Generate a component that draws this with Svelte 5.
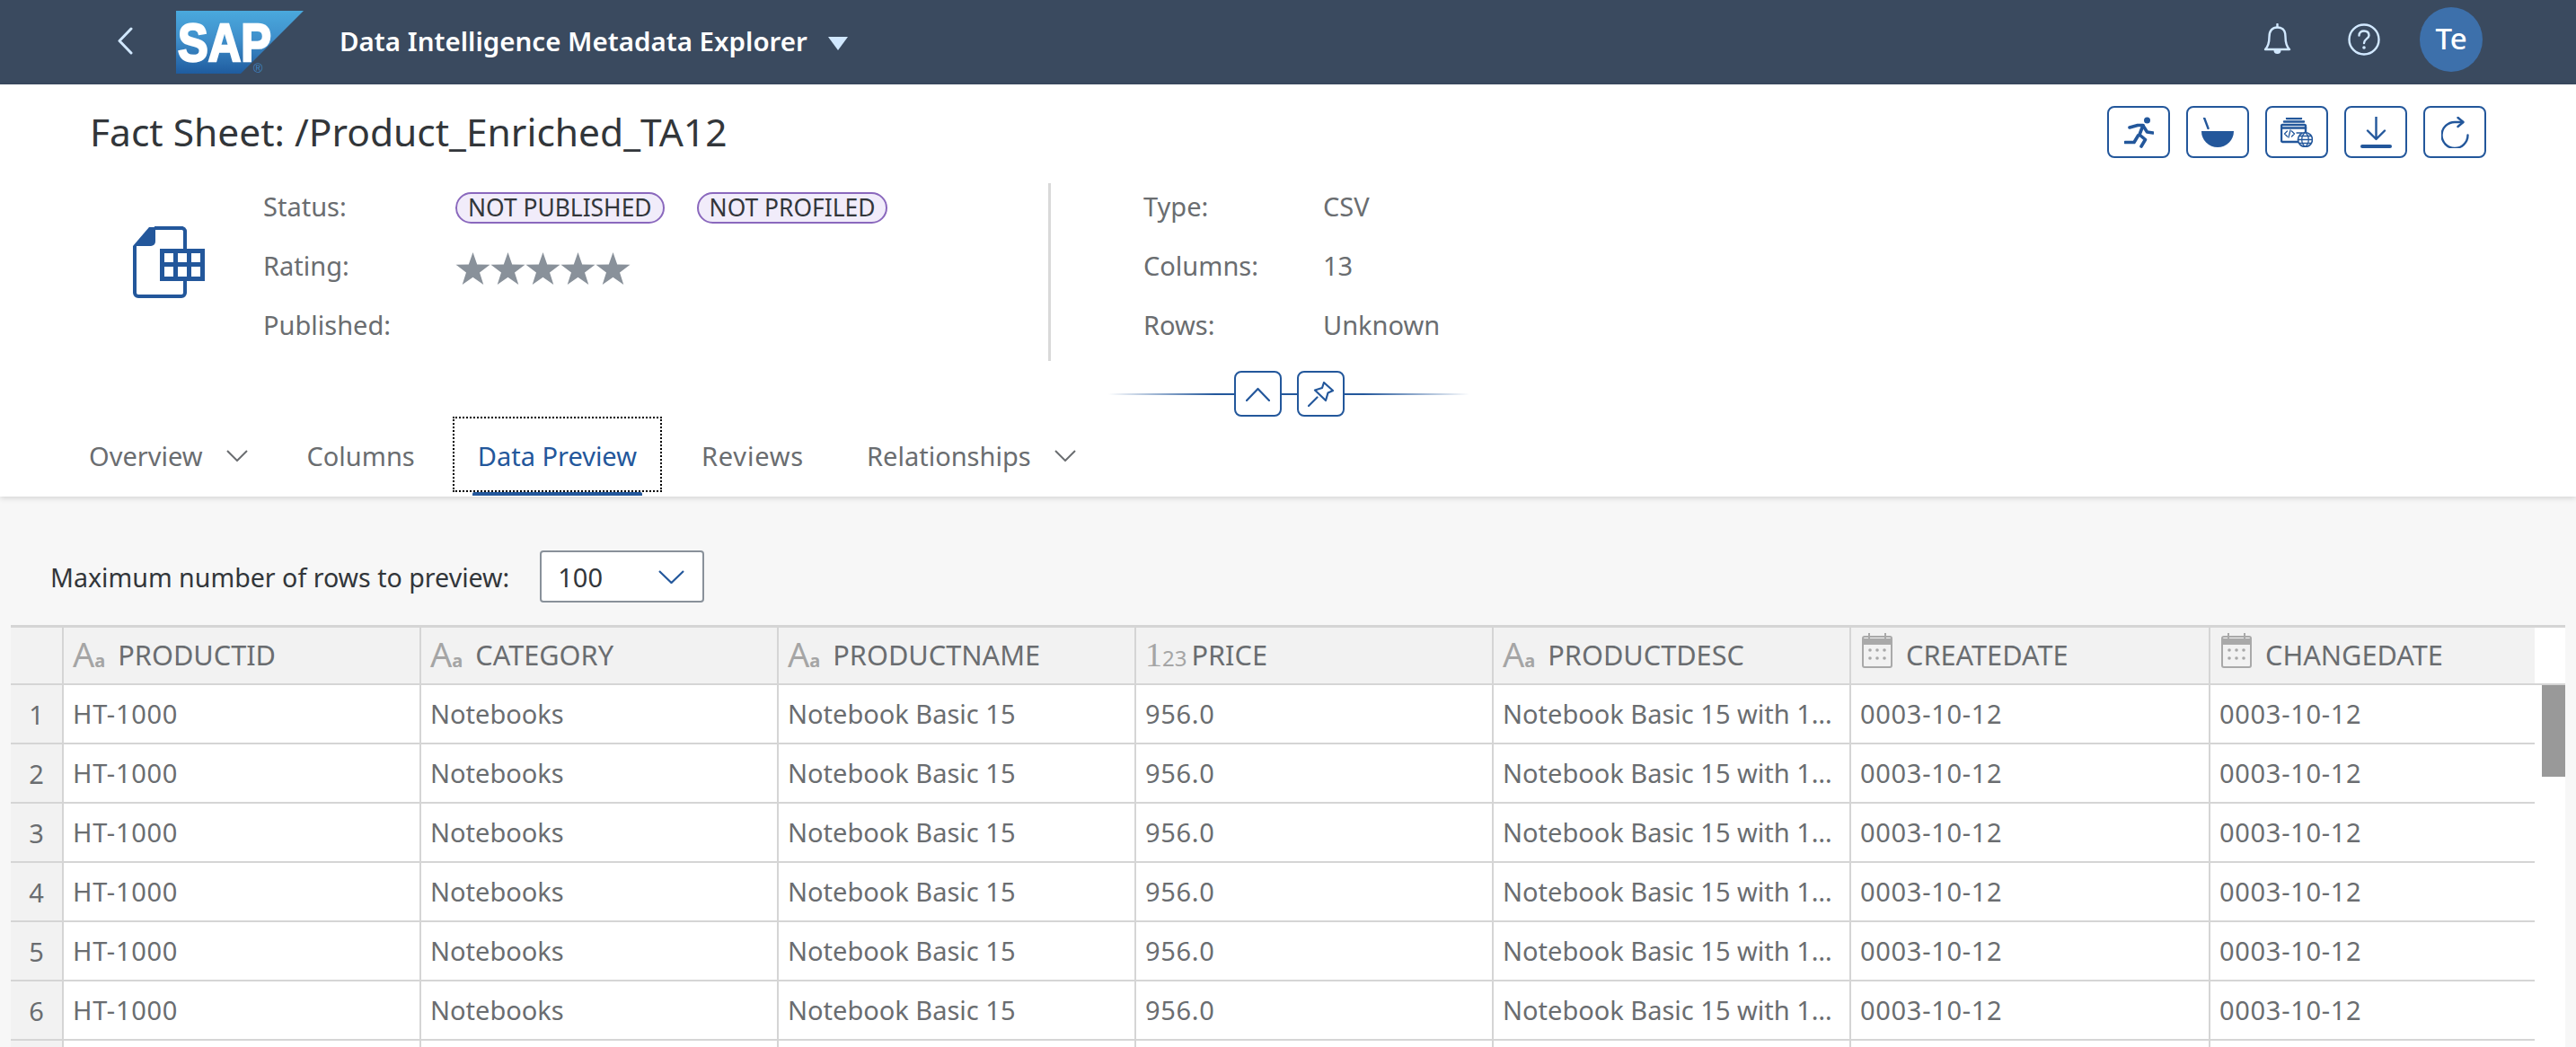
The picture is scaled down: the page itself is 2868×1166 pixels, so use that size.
<script>
  const columns = [
    { kind: 'text', name: 'PRODUCTID' },
    { kind: 'text', name: 'CATEGORY' },
    { kind: 'text', name: 'PRODUCTNAME' },
    { kind: 'num', name: 'PRICE' },
    { kind: 'text', name: 'PRODUCTDESC' },
    { kind: 'date', name: 'CREATEDATE' },
    { kind: 'date', name: 'CHANGEDATE' }
  ]
  const row = ['HT-1000', 'Notebooks', 'Notebook Basic 15', '956.0', 'Notebook Basic 15 with 16 GB RAM', '0003-10-12', '0003-10-12']
  const rows = [1, 2, 3, 4, 5, 6, 7]
  const stars = [0, 1, 2, 3, 4]
</script>

<div class="page">
  <header class="shell">
    <svg class="back" width="17" height="31" viewBox="0 0 17 31"><path d="M15 2 L2 15.5 L15 29" /></svg>
    <svg class="logo" width="142" height="70" viewBox="0 0 142 70">
      <defs>
        <linearGradient id="sapblue" x1="0" y1="0" x2="0" y2="1">
          <stop offset="0" stop-color="#4aa9dd" />
          <stop offset="0.45" stop-color="#3f8fcb" />
          <stop offset="1" stop-color="#1f5c9f" />
        </linearGradient>
      </defs>
      <polygon points="0,0 142,0 72,70 0,70" fill="url(#sapblue)" />
      <text x="2" y="56" class="logo-text" textLength="104" lengthAdjust="spacingAndGlyphs">SAP</text>
      <text x="86" y="69" class="logo-reg">®</text>
    </svg>
    <span class="app-title">Data Intelligence Metadata Explorer</span>
    <span class="app-caret"></span>
    <div class="shell-right">
      <svg width="31" height="36" viewBox="0 0 31 36" class="line-icon">
        <path d="M2 29 C6 25 6.500 21 6.500 15 C6.500 8 10 4.500 15.500 4.500 C21 4.500 24.500 8 24.500 15 C24.500 21 25 25 29 29 Z" />
        <path d="M15.500 1 V4" />
        <path class="fill" d="M11.500 30 H19.500 A4 4 0 0 1 11.500 30 Z" />
      </svg>
      <svg width="36" height="36" viewBox="0 0 36 36" class="line-icon help">
        <circle cx="18" cy="18" r="16.500" />
        <path d="M12.500 13.500 C12.500 10 15 8.500 18 8.500 C21.500 8.500 23.500 10.500 23.500 13.500 C23.500 17 18 17.500 18 22" />
        <circle class="fill" cx="18" cy="27" r="1.800" />
      </svg>
      <div class="avatar">Te</div>
    </div>
  </header>

  <section class="head">
    <div class="titlebar">
      <h1>Fact Sheet: /Product_Enriched_TA12</h1>
      <div class="actions">
        <button class="act">
          <svg width="33" height="35" viewBox="0 0 33 35">
            <circle class="b-fill" cx="25.500" cy="4" r="3.500" />
            <path class="b-thick" d="M6 12 L15 9.500 H21 L17 20 L23.500 25.500 L19 33" />
            <path class="b-thick" d="M21 10 L25.500 17 L32 18" />
            <path class="b-thick" d="M15.500 21 L11 28.500 H1" />
          </svg>
        </button>
        <button class="act">
          <svg width="36" height="33" viewBox="0 0 36 33">
            <path class="b-line" d="M3 0 L7.500 12" />
            <path class="b-fill" d="M0 15 H36 A18 18 0 0 1 0 15 Z" />
          </svg>
        </button>
        <button class="act">
          <svg width="36" height="33" viewBox="0 0 36 33">
            <path class="b-line" d="M7 1 H23 M4 4.500 H26" />
            <rect class="b-line" x="1" y="8" width="27" height="19" rx="1.500" />
            <path class="b-line" d="M1 11.500 H28" />
            <path class="b-thin" d="M7.500 15 L4.500 18 L7.500 21 M11 14 L9 22 M12.500 15 L15.500 18 L12.500 21 M18 17 H24" />
            <circle class="globe-bg" cx="27.500" cy="24.500" r="8" />
            <path class="b-thin" d="M19.500 24.500 H35.500 M21 20.500 H34 M21 28.500 H34 M27.500 16.500 C22.500 20 22.500 29 27.500 32.500 C32.500 29 32.500 20 27.500 16.500 Z" />
          </svg>
        </button>
        <button class="act">
          <svg width="35" height="35" viewBox="0 0 35 35">
            <path class="b-line" d="M17.500 0 V24 M8 15.500 L17.500 25 L27 15.500" />
            <rect class="b-fill" x="0" y="31" width="35" height="4" rx="2" />
          </svg>
        </button>
        <button class="act">
          <svg width="31" height="35" viewBox="0 0 31 35">
            <path class="b-line" d="M24 6 H15.500 A14.500 14.500 0 1 0 29.500 20.500" />
            <path class="b-line" d="M18.500 1 L24.500 6 L18.500 11" />
          </svg>
        </button>
      </div>
    </div>

    <div class="facts">
      <div class="facts-left">
        <svg class="obj-icon" width="80" height="81" viewBox="0 0 80 81">
          <path class="obj-line" d="M24 2 H55 A4 4 0 0 1 58 5 V26 M58 60 V74 A4 4 0 0 1 54 78 H6 A4 4 0 0 1 2 74 V22" />
          <path class="obj-fill" d="M0 22 L18 1 H25 V17 A5 5 0 0 1 20 22 Z" />
          <rect class="obj-fill" x="30" y="25" width="50" height="36" />
          <g class="obj-cell">
            <rect x="35" y="30" width="10" height="10" /><rect x="50" y="30" width="10" height="10" /><rect x="65" y="30" width="10" height="10" />
            <rect x="35" y="45" width="10" height="11" /><rect x="50" y="45" width="10" height="11" /><rect x="65" y="45" width="10" height="11" />
          </g>
        </svg>
        <dl class="grid">
          <dt>Status:</dt>
          <dd class="chips"><span class="chip">NOT PUBLISHED</span><span class="chip">NOT PROFILED</span></dd>
          <dt>Rating:</dt>
          <dd class="stars">
            {#each stars as s}
              <svg width="39" height="36" viewBox="0 0 39 36"><polygon points="19.500,0 24.200,13.500 38.500,13.700 27,22.400 31.300,36 19.500,27.800 7.700,36 12,22.400 0.500,13.700 14.800,13.500" /></svg>
            {/each}
          </dd>
          <dt>Published:</dt>
          <dd></dd>
        </dl>
      </div>
      <div class="divider"></div>
      <dl class="grid right">
        <dt>Type:</dt><dd>CSV</dd>
        <dt>Columns:</dt><dd>13</dd>
        <dt>Rows:</dt><dd>Unknown</dd>
      </dl>
    </div>

    <div class="collapse">
      <span class="fade left"></span>
      <button class="mini">
        <svg width="27" height="16" viewBox="0 0 27 16"><path d="M1 15 L13.500 2 L26 15" /></svg>
      </button>
      <span class="link"></span>
      <button class="mini">
        <svg width="29" height="28" viewBox="0 0 29 28">
          <path d="M1 27 L10.500 17.500" />
          <path d="M18 1 L28 10 L22.500 12.500 L20 21 L8 9.500 L16 7 Z" />
        </svg>
      </button>
      <span class="fade right"></span>
    </div>

    <nav class="tabs">
      <div class="tab overview">Overview<svg class="chev" width="24" height="13" viewBox="0 0 24 13"><path d="M1 1 L12 12 L23 1" /></svg></div>
      <div class="tab">Columns</div>
      <div class="tab active">Data Preview</div>
      <div class="tab reviews">Reviews</div>
      <div class="tab">Relationships<svg class="chev" width="24" height="13" viewBox="0 0 24 13"><path d="M1 1 L12 12 L23 1" /></svg></div>
    </nav>
  </section>

  <main class="content">
    <div class="toolbar">
      <span class="tool-label">Maximum number of rows to preview:</span>
      <div class="select">
        <span>100</span>
        <svg width="29" height="15" viewBox="0 0 29 15"><path d="M1 1 L14.500 14 L28 1" /></svg>
      </div>
    </div>

    <div class="table">
      <div class="tr th">
        <div class="num"></div>
        {#each columns as col}
          <div class="cell">
            {#if col.kind === 'text'}
              <span class="type"><span class="big">A</span><b>a</b></span>
            {:else if col.kind === 'num'}
              <span class="type digits"><span class="big serif">1</span><span class="sub">23</span></span>
            {:else}
              <svg class="cal" width="34" height="40" viewBox="0 0 34 40">
                <path d="M1 7 H33 V14 H1 Z" fill="#a9a9a9" />
                <rect x="1" y="5" width="32" height="34" rx="2" fill="none" stroke="#a9a9a9" stroke-width="2" />
                <path d="M8 1 V7 M26 1 V7" stroke="#a9a9a9" stroke-width="2" />
                {#each [9, 17, 25] as x}
                  <circle cx={x} cy="20" r="1.800" fill="#a9a9a9" /><circle cx={x} cy="29" r="1.800" fill="#a9a9a9" />
                {/each}
              </svg>
            {/if}
            <span class="name">{col.name}</span>
          </div>
        {/each}
      </div>
      {#each rows as r}
        <div class="tr">
          <div class="num">{r}</div>
          {#each row as value}
            <div class="cell"><span class="val" class:numeric={/\d/.test(value) && value.length < 12}>{value}</span></div>
          {/each}
        </div>
      {/each}
      <div class="thumb"></div>
    </div>
  </main>
</div>

<style>
  :global(body){
    margin: 0;
    background: #f7f7f7;
    font-family: "Noto Sans", "Open Sans", sans-serif;
    overflow: hidden;
  }

  .page{
    height: 1166px;
    overflow: hidden;
    font-size: 29px;
    color: #6a6d70;
  }

  .shell{
    height: 94px;
    box-sizing: border-box;
    background: #3a4a5f;
    display: flex;
    align-items: center;
    padding: 0 104px 0 131px;
    color: #fff;
  }
  .back{
    margin-top: -4px;
  }
  .back path{
    fill: none;
    stroke: #d1e8ff;
    stroke-width: 3;
    stroke-linecap: round;
    stroke-linejoin: round;
  }
  .logo{
    margin-left: 48px;
    margin-top: -1px;
  }
  .logo-text{
    font-family: "Liberation Sans", sans-serif;
    font-weight: 700;
    font-size: 60px;
    fill: #fff;
    stroke: #fff;
    stroke-width: 2.500;
  }
  .logo-reg{
    font-family: "Liberation Sans", sans-serif;
    font-size: 14px;
    fill: #3f86c4;
  }
  .app-title{
    margin-left: 40px;
    font-weight: 600;
    font-size: 29.500px;
    margin-top: -3px;
  }
  .app-caret{
    margin-left: 23px;
    border-left: 11px solid transparent;
    border-right: 11px solid transparent;
    border-top: 15px solid #d1e8ff;
    margin-top: 3px;
  }
  .shell-right{
    margin-left: auto;
    display: flex;
    align-items: center;
  }
  .line-icon{
    margin-top: -6px;
  }
  .line-icon.help{
    margin-left: 63px;
    margin-right: 44px;
  }
  .line-icon path, .line-icon circle{
    fill: none;
    stroke: #d1e8ff;
    stroke-width: 2.400;
    stroke-linejoin: round;
    stroke-linecap: round;
  }
  .line-icon .fill{
    fill: #d1e8ff;
    stroke: none;
  }
  .avatar{
    width: 70px;
    height: 72px;
    border-radius: 50%;
    background: #3d70ab;
    display: flex;
    align-items: center;
    justify-content: center;
    font-size: 33px;
    font-weight: 500;
    margin-top: -6px;
    padding-bottom: 4px;
    box-sizing: border-box;
  }

  .head{
    background: #fff;
    height: 459px;
    box-sizing: border-box;
    box-shadow: 0 2px 6px rgba(0,0,0,.14);
    position: relative;
  }
  .titlebar{
    display: flex;
    align-items: center;
    justify-content: space-between;
    padding: 24px 100px 0 100px;
  }
  h1{
    margin: 0;
    font-weight: 400;
    font-size: 42.500px;
    color: #32363a;
    line-height: 58px;
  }
  .actions{
    display: flex;
    gap: 18px;
  }
  button{
    background: #fff;
    border: 2px solid #23579b;
    border-radius: 8px;
    padding: 0;
    display: flex;
    align-items: center;
    justify-content: center;
    box-sizing: border-box;
  }
  .act{
    width: 70px;
    height: 58px;
  }
  .b-fill{
    fill: #23579b;
  }
  .b-line, .b-thin, .b-thick{
    fill: none;
    stroke: #23579b;
    stroke-width: 2.400;
    stroke-linejoin: round;
    stroke-linecap: round;
  }
  .b-thin{
    stroke-width: 1.300;
  }
  .b-thick{
    stroke-width: 3.600;
  }
  .globe-bg{
    fill: #fff;
    stroke: #23579b;
    stroke-width: 1.600;
  }

  .facts{
    display: flex;
    height: 198px;
    margin-top: 21px;
  }
  .facts-left{
    display: flex;
    width: 1167px;
    padding-left: 148px;
    box-sizing: border-box;
  }
  .obj-icon{
    margin-top: 55px;
    margin-right: 65px;
    flex: none;
  }
  .obj-line{
    fill: none;
    stroke: #23579b;
    stroke-width: 4;
  }
  .obj-fill{
    fill: #23579b;
  }
  .obj-cell rect{
    fill: #fff;
  }
  .grid{
    margin: 0;
    display: grid;
    grid-template-columns: 214px 1fr;
    grid-auto-rows: 66px;
    align-items: center;
    flex: 1;
  }
  .grid.right{
    grid-template-columns: 200px 1fr;
    margin-left: 103px;
  }
  dt, dd{
    margin: 0;
    padding-bottom: 2px;
  }
  .chips{
    display: flex;
    gap: 36px;
    padding: 0;
    margin-top: 2px;
  }
  .chip{
    height: 35px;
    box-sizing: border-box;
    border: 2px solid #8a68bd;
    border-radius: 18px;
    background: #f1ecfa;
    color: #32363a;
    display: flex;
    align-items: center;
    padding: 0 12px;
    font-size: 26.400px;
  }
  .stars{
    display: flex;
    padding: 0;
    margin-top: 6px;
  }
  .stars polygon{
    fill: #89919a;
  }
  .divider{
    width: 3px;
    height: 198px;
    margin-top: 7px;
    background: #d9d9d9;
  }

  .collapse{
    display: flex;
    align-items: center;
    width: 402px;
    margin: 18px 0 0 1234px;
  }
  .fade{
    flex: 1;
    height: 2px;
  }
  .fade.left{
    background: linear-gradient(to right, rgba(35,87,155,0), #23579b 85%);
  }
  .fade.right{
    background: linear-gradient(to left, rgba(35,87,155,0), #23579b 85%);
  }
  .link{
    width: 17px;
    height: 2px;
    background: #23579b;
  }
  .mini{
    width: 53px;
    height: 51px;
  }
  .mini path{
    fill: none;
    stroke: #23579b;
    stroke-width: 2.200;
    stroke-linejoin: round;
    stroke-linecap: round;
  }

  .tabs{
    display: flex;
    gap: 14px;
    padding-left: 71px;
  }
  .tab{
    height: 84px;
    box-sizing: border-box;
    padding: 0 28px;
    display: flex;
    align-items: center;
    position: relative;
    padding-top: 2px;
  }
  .tab.overview{
    margin-right: -4px;
  }
  .tab.active{
    margin-right: 2px;
  }
  .tab.reviews{
    margin-right: 0;
    letter-spacing: .8px;
  }
  .chev{
    margin-left: 26px;
  }
  .chev path{
    fill: none;
    stroke: #6a6d70;
    stroke-width: 2;
  }
  .tab.active{
    color: #23579b;
    outline: 2px dotted #000;
    outline-offset: -2px;
  }
  .tab.active::after{
    content: '';
    position: absolute;
    left: 22px;
    right: 22px;
    top: 84px;
    height: 4px;
    background: #23579b;
    border-radius: 2px 2px 0 0;
  }

  .toolbar{
    display: flex;
    align-items: center;
    padding: 60px 0 0 56px;
  }
  .tool-label{
    color: #32363a;
    font-size: 28.600px;
  }
  .select{
    margin-left: 34px;
    width: 183px;
    height: 58px;
    box-sizing: border-box;
    background: #fff;
    border: 2px solid #89919a;
    border-radius: 4px;
    display: flex;
    align-items: center;
    justify-content: space-between;
    padding: 0 20px 0 18px;
    color: #32363a;
  }
  .select path{
    fill: none;
    stroke: #23579b;
    stroke-width: 2.200;
  }

  .table{
    margin: 25px 12px 0;
    background: #fff;
    position: relative;
  }
  .tr{
    display: grid;
    grid-template-columns: 57px repeat(5, 398px) 400px 363px;
    height: 66px;
    box-sizing: border-box;
    width: 2810px;
    border-bottom: 2px solid #d5d5d5;
  }
  .tr.th{
    width: auto;
    height: 67px;
    border-top: 3px solid #d5d5d5;
    border-bottom: 2px solid #d5d5d5;
  }
  .th > div{
    background: #f2f2f2;
  }
  .num{
    background: #f2f2f2;
    display: flex;
    align-items: center;
    justify-content: center;
  }
  .cell{
    border-left: 2px solid #d5d5d5;
    padding: 0 10px 2px 10px;
    display: flex;
    align-items: center;
    min-width: 0;
    box-sizing: border-box;
    overflow: hidden;
  }
  .val{
    white-space: nowrap;
    overflow: hidden;
    text-overflow: ellipsis;
  }
  .val.numeric{
    letter-spacing: .7px;
  }
  .type{
    color: #a5a5a5;
    display: inline-flex;
    align-items: baseline;
    margin-right: 14px;
    white-space: nowrap;
  }
  .type.digits{
    margin-right: 5px;
  }
  .big{
    font-size: 38px;
    line-height: 1;
  }
  .serif{
    font-family: "Liberation Serif", serif;
  }
  .type b{
    font-size: 20px;
    font-weight: 700;
  }
  .sub{
    font-size: 24px;
  }
  .name{
    white-space: nowrap;
    font-size: 30.700px;
  }
  .cal{
    margin: -10px 15px 0 2px;
    flex: none;
  }
  .thumb{
    position: absolute;
    left: 2818px;
    top: 67px;
    width: 26px;
    height: 102px;
    background: #999;
  }
</style>
